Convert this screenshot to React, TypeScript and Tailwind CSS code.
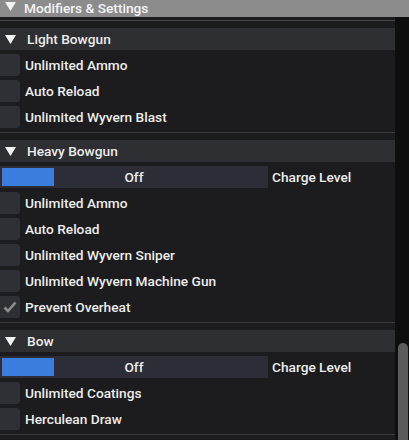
import React from "react";

const font = { fontFamily: "Roboto, 'Noto Sans', sans-serif" };

function Tri() {
  return (
    <svg width="11" height="9" viewBox="0 0 11 9" className="shrink-0">
      <polygon points="0,0 11,0 5.5,9" fill="#f2f2f2" />
    </svg>
  );
}

function Header({ title }: { title: string }) {
  return (
    <div className="h-[22px] bg-[#2e2f32] flex items-center pl-[5px] gap-[11px] text-[13.7px] font-medium text-[#ececec]">
      <Tri />
      <span>{title}</span>
    </div>
  );
}

function Check({ label, checked }: { label: string; checked?: boolean }) {
  return (
    <div className="mt-[4px] h-[22px] flex items-center">
      <div className="w-[20px] h-[22px] bg-[#2f3035] rounded-r-[3px] flex items-center justify-center">
        {checked && (
          <svg width="14" height="12" viewBox="0 0 14 12">
            <polyline points="1.5,6.5 5,10 12.5,1.5" fill="none" stroke="#8e8e90" strokeWidth="2.6" strokeLinejoin="round" />
          </svg>
        )}
      </div>
      <span className="ml-[5px] text-[13.7px] font-medium text-[#ececec]">{label}</span>
    </div>
  );
}

function Slider() {
  return (
    <div className="mt-[4px] h-[22px] flex items-center">
      <div className="relative w-[268px] h-[22px] bg-[#2c2d36] flex items-center justify-center">
        <div className="absolute left-[2px] top-[2px] w-[52px] h-[18px] bg-[#3b7ddd]" />
        <span className="relative text-[13.7px] font-medium text-[#ececec]">Off</span>
      </div>
      <span className="ml-[4px] text-[13.7px] font-medium text-[#ececec]">Charge Level</span>
    </div>
  );
}

function Sep({ mb = true }: { mb?: boolean }) {
  return <div className={mb ? "mt-[4px] mb-[7px] h-px bg-[#3a3a3d]" : "mt-[4px] h-px bg-[#3a3a3d]"} />;
}

export default function App() {
  return (
    <div className="w-[409px] h-[440px] bg-[#1c1c1e] overflow-hidden flex flex-col" style={font}>
      <div className="h-[17px] shrink-0 bg-[#8c8c8c] flex items-center pl-[5px] gap-[8px] text-[13.7px] font-medium text-[#f4f4f4] leading-[16px]">
        <div className="-mt-[4px]">
          <Tri />
        </div>
        <span className="-mt-[2px]">Modifiers &amp; Settings</span>
      </div>
      <div className="flex-1 flex min-h-0">
        <div className="w-[395px] flex flex-col overflow-hidden">
          <div className="mt-[3px] mb-[7px] h-px bg-[#48484b] shrink-0" />
          <Header title="Light Bowgun" />
          <Check label="Unlimited Ammo" />
          <Check label="Auto Reload" />
          <Check label="Unlimited Wyvern Blast" />
          <Sep />
          <Header title="Heavy Bowgun" />
          <Slider />
          <Check label="Unlimited Ammo" />
          <Check label="Auto Reload" />
          <Check label="Unlimited Wyvern Sniper" />
          <Check label="Unlimited Wyvern Machine Gun" />
          <Check label="Prevent Overheat" checked />
          <Sep />
          <Header title="Bow" />
          <Slider />
          <Check label="Unlimited Coatings" />
          <Check label="Herculean Draw" />
          <Sep mb={false} />
        </div>
        <div className="w-[14px] bg-[#0e0e0e] flex flex-col">
          <div className="mt-[326px] ml-[3px] w-[10px] flex-1 bg-[#5b5b5c] rounded-t-[5px]" />
        </div>
      </div>
    </div>
  );
}
